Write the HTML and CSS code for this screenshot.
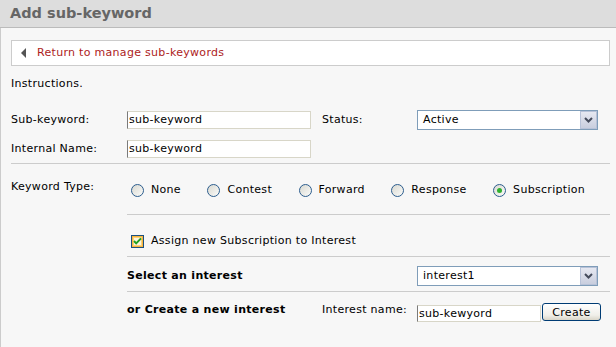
FILE: index.html
```html
<!DOCTYPE html>
<html lang="en">
<head>
  <meta charset="UTF-8" />
  <title>Add sub-keyword</title>
  <link rel="stylesheet" href="styles.css">
</head>
<body>
  <div class="header">
    <h1>Add sub-keyword</h1>
  </div>

  <div class="content">
    <div class="back-box">
      <a class="back-link" href="#"><span class="tri"></span>Return to manage sub-keywords</a>
    </div>

    <p class="instructions">Instructions.</p>

    <div class="form-grid">
      <label>Sub-keyword:</label>
      <input class="text wide" type="text" value="sub-keyword">
      <label>Status:</label>
      <div class="select">
        <span>Active</span>
        <span class="select-btn"><svg width="9" height="6" viewBox="0 0 9 6"><polyline points="1,1 4.5,4.5 8,1" fill="none" stroke="#454b5c" stroke-width="2"/></svg></span>
      </div>

      <label>Internal Name:</label>
      <input class="text wide" type="text" value="sub-keyword">
    </div>

    <div class="type-block">
      <div class="type-label">Keyword Type:</div>
      <div class="type-body">
        <div class="section radios">
          <label class="opt"><span class="radio"></span>None</label>
          <label class="opt"><span class="radio"></span>Contest</label>
          <label class="opt"><span class="radio"></span>Forward</label>
          <label class="opt"><span class="radio"></span>Response</label>
          <label class="opt"><span class="radio checked"></span>Subscription</label>
        </div>

        <div class="section assign">
          <label class="opt">
            <svg class="check" width="13" height="13" viewBox="0 0 13 13">
              <rect x="0.5" y="0.5" width="12" height="12" fill="#f8b43c" stroke="#1c5180"/>
              <rect x="2.5" y="2.5" width="8" height="8" fill="#fdf6e0" stroke="#fbd47e"/>
              <polyline points="3,6 5.2,8.4 10,3.4" fill="none" stroke="#21a121" stroke-width="2"/>
            </svg>
            Assign new Subscription to Interest
          </label>
        </div>

        <div class="section pick">
          <strong>Select an interest</strong>
          <div class="select">
            <span>interest1</span>
            <span class="select-btn"><svg width="9" height="6" viewBox="0 0 9 6"><polyline points="1,1 4.5,4.5 8,1" fill="none" stroke="#454b5c" stroke-width="2"/></svg></span>
          </div>
        </div>

        <div class="section create">
          <strong>or Create a new interest</strong>
          <label>Interest name:</label>
          <input class="text short" type="text" value="sub-kewyord">
          <button class="create-btn">Create</button>
        </div>
      </div>
    </div>
  </div>
</body>
</html>
```

FILE: styles.css
```css
* {
  box-sizing: border-box;
}

html, body {
  height: 100%;
}

body {
  margin: 0;
  background: #f7f7f7;
  font-family: "DejaVu Sans", Verdana, sans-serif;
  font-size: 11px;
  line-height: 14px;
  letter-spacing: 0.3px;
  color: #000;
  display: flex;
  flex-direction: column;
}

.header {
  background: #dddddd;
  border-bottom: 1px solid #bbbbbb;
  height: 28px;
}

.header h1 {
  margin: 0;
  padding-left: 10px;
  font-size: 14.5px;
  line-height: 27px;
  font-weight: bold;
  letter-spacing: 0;
  color: #666;
}

.content {
  flex: 1;
  border-left: 1px solid #cccccc;
  padding: 0 6px 0 10px;
}

/* back link */
.back-box {
  margin-top: 12px;
  height: 26px;
  background: #fff;
  border: 1px solid #cccccc;
  display: flex;
  align-items: center;
}

.back-link {
  display: flex;
  align-items: center;
  color: #ad1c1c;
  text-decoration: none;
}

.tri {
  width: 0;
  height: 0;
  margin: 0 11px 0 9px;
  border-right: 5px solid #555;
  border-top: 5px solid transparent;
  border-bottom: 5px solid transparent;
}

.instructions {
  margin: 11px 0 0;
}

/* top fields */
.form-grid {
  margin-top: 14px;
  display: grid;
  grid-template-columns: 116px 195px 95px 180px;
  grid-auto-rows: 29px;
  align-items: center;
  border-bottom: 1px solid #cccccc;
}

.text {
  height: 18px;
  padding: 0 1px;
  border: 1px solid #d8d6c8;
  border-left-color: #7a7a7a;
  background: #fff;
  font-family: inherit;
  font-size: 11px;
  letter-spacing: 0.3px;
  color: #000;
}

.wide {
  width: 184px;
}

.short {
  width: 124px;
  height: 17px;
  margin-top: 2px;
}

.select {
  width: 181px;
  height: 20px;
  border: 1px solid #7f9db9;
  background: #fff;
  display: flex;
  align-items: center;
  justify-content: space-between;
  padding-left: 5px;
}

.select-btn {
  width: 17px;
  height: 18px;
  border: 1px solid #b8c2d8;
  background: linear-gradient(#e6e8f1, #c9cede);
  display: flex;
  align-items: center;
  justify-content: center;
}

/* keyword type block */
.type-block {
  display: grid;
  grid-template-columns: 116px 1fr;
}

.type-label {
  padding-top: 16px;
}

.section {
  border-bottom: 1px solid #cccccc;
}

.section:last-child {
  border-bottom: none;
}

.opt {
  display: flex;
  align-items: center;
}

.radios {
  display: flex;
  gap: 26.5px;
  padding: 19px 0 17px 4px;
}

.radio {
  position: relative;
  width: 13px;
  height: 13px;
  margin-right: 7px;
  border-radius: 50%;
  border: 1px solid #2c5d8e;
  background: linear-gradient(135deg, #d9d9d1, #fbfbf9);
}

.radio.checked::after {
  content: "";
  position: absolute;
  left: 3px;
  top: 3px;
  width: 5px;
  height: 5px;
  border-radius: 50%;
  background: #2fb12f;
}

.assign {
  padding: 19px 0 8px 4px;
}

.check {
  margin-right: 7px;
}

.pick {
  display: grid;
  grid-template-columns: 290px 180px;
  align-items: center;
  padding: 9px 0 5px;
}

.create {
  display: grid;
  grid-template-columns: 195px 95px 125px auto;
  align-items: start;
  padding-top: 11px;
}

.create strong,
.create label {
  line-height: 14px;
}

.create-btn {
  width: 59px;
  height: 18px;
  padding: 0;
  border: 1px solid #003c74;
  border-radius: 3px;
  background: linear-gradient(#ffffff, #f0efe9 70%, #d9d5c8);
  font-family: inherit;
  font-size: 11px;
  letter-spacing: 0.3px;
  color: #000;
}
```
